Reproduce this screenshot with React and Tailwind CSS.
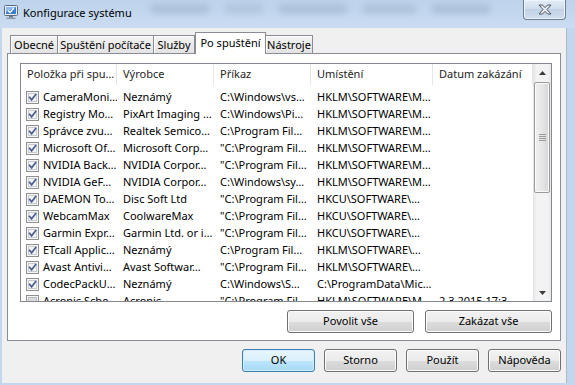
import React from "react";

const rows = [
  ["CameraMoni…", "Neznámý", "C:\\Windows\\vs…", "HKLM\\SOFTWARE\\M…", "", true],
  ["Registry Mo…", "PixArt Imaging …", "C:\\Windows\\Pi…", "HKLM\\SOFTWARE\\M…", "", true],
  ["Správce zvu…", "Realtek Semico…", "C:\\Program Fil…", "HKLM\\SOFTWARE\\M…", "", true],
  ["Microsoft Of…", "Microsoft Corp…", "\"C:\\Program Fil…", "HKLM\\SOFTWARE\\M…", "", true],
  ["NVIDIA Back…", "NVIDIA Corpor…", "\"C:\\Program Fil…", "HKLM\\SOFTWARE\\M…", "", true],
  ["NVIDIA GeF…", "NVIDIA Corpor…", "C:\\Windows\\sy…", "HKLM\\SOFTWARE\\M…", "", true],
  ["DAEMON To…", "Disc Soft Ltd", "\"C:\\Program Fil…", "HKCU\\SOFTWARE\\…", "", true],
  ["WebcamMax", "CoolwareMax", "\"C:\\Program Fil…", "HKCU\\SOFTWARE\\…", "", true],
  ["Garmin Expr…", "Garmin Ltd. or i…", "\"C:\\Program Fil…", "HKCU\\SOFTWARE\\…", "", true],
  ["ETcall Applic…", "Neznámý", "C:\\Program Fil…", "HKLM\\SOFTWARE\\…", "", true],
  ["Avast Antivi…", "Avast Softwar…", "\"C:\\Program Fil…", "HKLM\\SOFTWARE\\…", "", true],
  ["CodecPackU…", "Neznámý", "C:\\Windows\\S…", "C:\\ProgramData\\Mic…", "", true],
  ["Acronis Sche…", "Acronis", "\"C:\\Program Fil…", "HKLM\\SOFTWARE\\M…", "2.3.2015 17:3…", false],
];

function CheckBox({ checked }) {
  return (
    <svg width="13" height="13" viewBox="0 0 13 13" className="shrink-0">
      <rect x="0.5" y="0.5" width="12" height="12" fill="#f6f6f6" stroke="#8e8f8f" />
      <rect x="2.5" y="2.5" width="8" height="8" fill={checked ? "#f2f4f7" : "#d9dcdf"} stroke={checked ? "#c6cbd2" : "#b8bdc3"} />
      {checked && (
        <path d="M3.6 6.4 L5.6 8.8 L9.6 3.6" fill="none" stroke="#4a5f8f" strokeWidth="1.7" strokeLinecap="square" />
      )}
    </svg>
  );
}

function Btn({ children, focused, w }) {
  return (
    <div
      className={
        "h-[23px] flex items-center justify-center rounded-[3px] border text-[11px] text-black whitespace-nowrap " +
        w +
        " " +
        (focused
          ? "border-[#3c7fb1] bg-[linear-gradient(#eaf6fd_0%,#d9f0fc_50%,#bee6fd_50%,#a7d9f5_100%)] shadow-[inset_0_0_0_1px_#d4ecfa]"
          : "border-[#707070] bg-[linear-gradient(#f2f2f2_0%,#ebebeb_50%,#dddddd_50%,#cfcfcf_100%)] shadow-[inset_0_0_0_1px_#fcfcfc]")
      }
    >
      {children}
    </div>
  );
}

export default function App() {
  const colW = ["w-[96px]", "w-[97px]", "w-[97px]", "w-[122px]", "w-[100px]"];
  return (
    <div className="w-[575px] h-[385px] flex flex-col overflow-hidden bg-[#c2d7ee] font-['Noto_Sans',sans-serif] text-[11px] text-black">
      {/* Title bar */}
      <div className="relative h-[28px] flex items-start bg-[linear-gradient(#bdd3ec,#cadcf1)]">
        <div className="absolute left-[150px] top-[4px] w-[360px] h-[14px] flex gap-[14px] opacity-60">
          <div className="w-[60px] h-[10px] rounded-full bg-[#9fb4cc] blur-[3px]" />
          <div className="w-[40px] h-[10px] rounded-full bg-[#a9bdd3] blur-[3px]" />
          <div className="w-[70px] h-[10px] rounded-full bg-[#9fb4cc] blur-[3px]" />
          <div className="w-[55px] h-[10px] rounded-full bg-[#a4b8cf] blur-[3px]" />
          <div className="w-[60px] h-[10px] rounded-full bg-[#9fb4cc] blur-[3px]" />
        </div>
        <svg width="16" height="16" viewBox="0 0 16 16" className="relative ml-[3px] mt-[4px]">
          <rect x="1.5" y="1.5" width="13" height="10" rx="1" fill="#e8eef6" stroke="#5d6b7d" />
          <rect x="3" y="3" width="10" height="7" fill="#3e7fd0" />
          <path d="M3 3 L13 3 L3 8 Z" fill="#8fbcf0" />
          <path d="M5 6.5 L7 8.5 L11 4" fill="none" stroke="#ffffff" strokeWidth="1.3" />
          <rect x="6" y="12" width="4" height="1.5" fill="#6d7886" />
          <rect x="3.5" y="13.5" width="9" height="1.5" fill="#8c96a3" />
        </svg>
        <span className="relative ml-[4px] mt-[5px] leading-[16px] text-[11px]">Konfigurace systému</span>
        <div className="relative ml-auto mr-[9px] w-[43px] h-[20px] rounded-b-[4px] border border-t-0 border-[#6f7f93] bg-[linear-gradient(#e3ecf7,#cfdcec_50%,#c2d2e6_50%,#cfdef0)] shadow-[inset_0_0_0_1px_#eef4fb] flex items-center justify-center">
          <svg width="14" height="11" viewBox="0 0 14 11">
            <path d="M1 1 L4.5 1 L7 3.6 L9.5 1 L13 1 L9 5.5 L13 10 L9.5 10 L7 7.4 L4.5 10 L1 10 L5 5.5 Z" fill="#e6e9ee" stroke="#50565f" strokeWidth="1" strokeLinejoin="round" />
          </svg>
        </div>
      </div>

      {/* Client area */}
      <div className="flex-1 flex pl-[2px] pr-[8px] pb-[2px]">
        <div className="flex-1 flex flex-col bg-[#f0f0f0] border-r border-[#a9b9cc] px-[5px] pt-[4px]">
          {/* Tabs */}
          <div className="h-[21px] flex items-end pl-[3px] whitespace-nowrap">
            <div className="w-[48px] h-[18px] border border-b-0 border-[#898c95] bg-[linear-gradient(#f3f3f3,#e3e3e3)] shadow-[inset_1px_1px_0_#ffffff] flex items-center justify-center leading-none">Obecné</div>
            <div className="w-[96px] h-[18px] border border-b-0 border-l-0 border-[#898c95] bg-[linear-gradient(#f3f3f3,#e3e3e3)] shadow-[inset_1px_1px_0_#ffffff] flex items-center justify-center leading-none">Spuštění počítače</div>
            <div className="w-[41px] h-[18px] border border-b-0 border-l-0 border-[#898c95] bg-[linear-gradient(#f3f3f3,#e3e3e3)] shadow-[inset_1px_1px_0_#ffffff] flex items-center justify-center leading-none">Služby</div>
            <div className="relative z-10 w-[71px] h-[22px] -mb-[1px] -mr-[1px] border border-b-0 border-[#898c95] bg-white flex items-start justify-center pt-[3px] leading-[14px]">Po spuštění</div>
            <div className="w-[48px] h-[18px] border border-b-0 border-[#898c95] bg-[linear-gradient(#f3f3f3,#e3e3e3)] shadow-[inset_1px_1px_0_#ffffff] flex items-center justify-center leading-none">Nástroje</div>
          </div>

          {/* Panel */}
          <div className="h-[288px] bg-white border border-[#898c95] flex flex-col pl-[12px] pt-[9px]">
            {/* List view */}
            <div className="w-[532px] h-[239px] border border-[#828790] flex overflow-hidden">
              <div className="w-[512px] flex flex-col overflow-hidden">
                <div className="h-[21px] shrink-0 flex bg-white text-[#1e1e1e]">
                  {["Položka při spu…", "Výrobce", "Příkaz", "Umístění", "Datum zakázání"].map((h, i) => (
                    <div key={i} className={colW[i] + " shrink-0 h-full flex items-center pl-[6px] border-r border-[#e3e6ea] whitespace-nowrap overflow-hidden"}>
                      {h}
                    </div>
                  ))}
                </div>
                <div className="pt-[4px] flex flex-col">
                  {rows.map((r, ri) => (
                    <div key={ri} className="h-[17px] shrink-0 flex items-center">
                      <div className={colW[0] + " shrink-0 flex items-center pl-[5px] gap-[4px] whitespace-nowrap overflow-hidden"}>
                        <CheckBox checked={r[5]} />
                        <span>{r[0]}</span>
                      </div>
                      {[1, 2, 3, 4].map((c) => (
                        <div key={c} className={colW[c] + " shrink-0 pl-[6px] whitespace-nowrap overflow-hidden"}>
                          {r[c]}
                        </div>
                      ))}
                    </div>
                  ))}
                </div>
              </div>
              {/* Scrollbar */}
              <div className="w-[18px] h-full flex flex-col bg-[linear-gradient(90deg,#e3e3e3,#f3f3f3_20%,#f3f3f3_80%,#e8e8e8)]">
                <div className="h-[17px] flex items-center justify-center">
                  <svg width="7" height="4" viewBox="0 0 7 4"><path d="M0 4 L3.5 0 L7 4 Z" fill="#3c3c3c" /></svg>
                </div>
                <div className="mt-[1px] mx-[1px] h-[111px] rounded-[2px] border border-[#9a9a9a] bg-[linear-gradient(90deg,#f0f0f0,#e6e6e6_50%,#d6d6d6)] shadow-[inset_0_0_0_1px_#fafafa] flex flex-col items-center justify-center gap-[1px]">
                  <div className="w-[7px] h-[1px] bg-[#9a9a9a]" />
                  <div className="w-[7px] h-[1px] bg-[#9a9a9a]" />
                  <div className="w-[7px] h-[1px] bg-[#9a9a9a]" />
                  <div className="w-[7px] h-[1px] bg-[#9a9a9a]" />
                </div>
                <div className="flex-1" />
                <div className="h-[17px] flex items-center justify-center">
                  <svg width="7" height="4" viewBox="0 0 7 4"><path d="M0 0 L3.5 4 L7 0 Z" fill="#3c3c3c" /></svg>
                </div>
              </div>
            </div>

            <div className="w-[532px] mt-[8px] flex justify-end gap-[11px]">
              <Btn w="w-[127px]">Povolit vše</Btn>
              <Btn w="w-[127px]">Zakázat vše</Btn>
            </div>
          </div>

          {/* Dialog buttons */}
          <div className="mt-[8px] flex justify-end gap-[9px] pr-[0px]">
            <Btn w="w-[73px]" focused>OK</Btn>
            <Btn w="w-[73px]">Storno</Btn>
            <Btn w="w-[73px]">Použít</Btn>
            <Btn w="w-[73px]">Nápověda</Btn>
          </div>
        </div>
      </div>
    </div>
  );
}
